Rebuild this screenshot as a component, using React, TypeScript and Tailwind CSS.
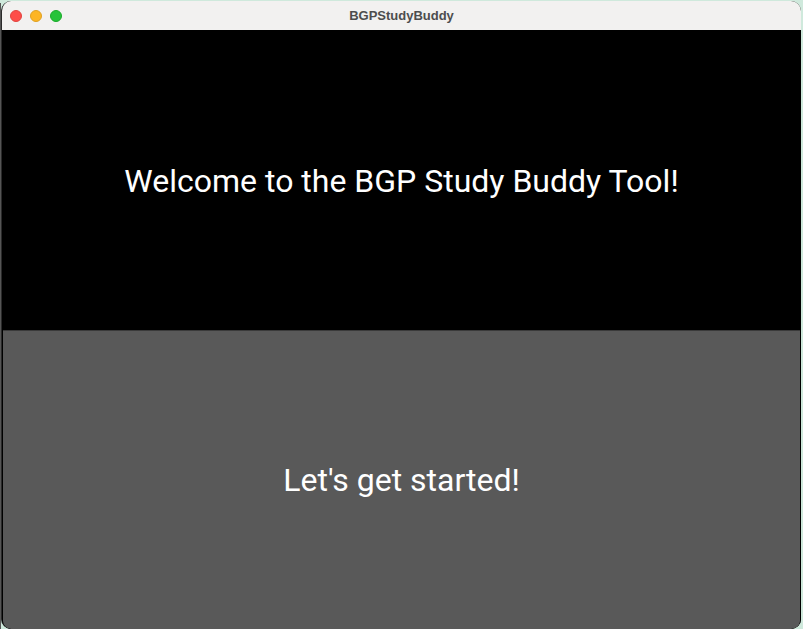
export default function App() {
  return (
    <div className="w-[803px] h-[629px] bg-[#cfe9dc] overflow-hidden relative" style={{ fontFamily: "Roboto, sans-serif" }}>
      <div className="absolute left-0 top-[3px] w-[1px] h-[626px] bg-[#555]" />
      <div className="absolute left-[1px] top-[1px] w-[800px] h-[628px] rounded-[10px] overflow-hidden flex flex-col bg-black border-l border-[#2a2a2a]">
        <div className="h-[29px] shrink-0 bg-[#f2f1f0] relative flex items-center justify-center">
          <div className="absolute left-[8px] top-[9px] flex gap-[8px]">
            <div className="w-[12px] h-[12px] rounded-full bg-[#fe4d49] border-[0.5px] border-[#e0443e]" />
            <div className="w-[12px] h-[12px] rounded-full bg-[#fdb524] border-[0.5px] border-[#dea123]" />
            <div className="w-[12px] h-[12px] rounded-full bg-[#26c33a] border-[0.5px] border-[#1aab29]" />
          </div>
          <span className="text-[13px] font-bold text-[#4d4d4d]" style={{ fontFamily: "'Liberation Sans', Arial, sans-serif" }}>BGPStudyBuddy</span>
        </div>
        <div className="h-[300px] shrink-0 bg-black flex items-center justify-center">
          <span className="text-white text-[32px] mt-[2px]">Welcome to the BGP Study Buddy Tool!</span>
        </div>
        <div className="flex-1 pl-[1px] pr-[1px] bg-black">
          <button className="w-full h-full bg-[#595959] border-t border-[#3a3a3a] rounded-b-[8px] flex items-center justify-center text-white text-[32px]">
            Let's get started!
          </button>
        </div>
      </div>
    </div>
  );
}
